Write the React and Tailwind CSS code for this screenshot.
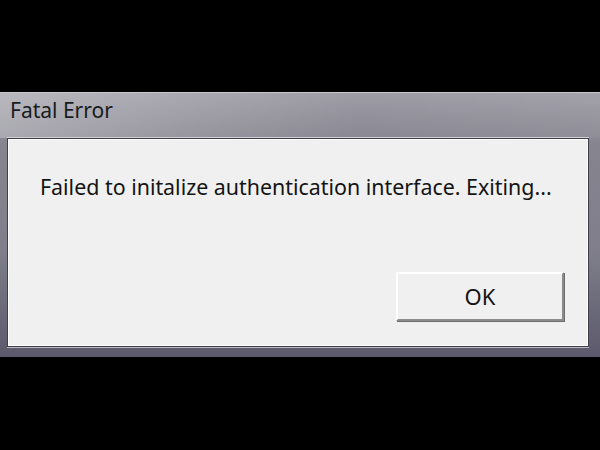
import React from "react";

const App = () => {
  return (
    <div className="w-[600px] h-[450px] bg-black flex flex-col overflow-hidden font-['Noto_Sans',sans-serif]">
      <div className="h-[92px] shrink-0" />

      {/* Window frame */}
      <div className="h-[265px] shrink-0 flex flex-col border-t border-t-[#c9c8ce] bg-[linear-gradient(180deg,#9e9da6_0%,#85848f_20%,#7f7e8a_60%,#5b596b_100%)]">
        {/* Title bar */}
        <div className="h-[45px] shrink-0 pl-[10px] pt-[3px] bg-[linear-gradient(90deg,rgba(255,255,255,0.28)_0%,rgba(255,255,255,0.12)_30%,rgba(255,255,255,0)_60%,rgba(255,255,255,0.05)_100%)]">
          <span className="text-[21px] leading-[28px] text-[#161c20]">Fatal Error</span>
        </div>

        {/* Panel */}
        <div className="ml-[7px] mr-[11px] h-[209px] border border-[#3f3e4a] shadow-[0_-1px_0_#d2d1d6,0_1px_0_#b9b8c2]">
          <div className="h-full border border-white bg-[#f0f0f0] flex flex-col pl-[31px] pr-[23px] pt-[32px] pb-[24px]">
            <p className="text-[21.4px] leading-[29px] text-[#141414] whitespace-nowrap">
              Failed to initalize authentication interface. Exiting...
            </p>
            <div className="flex-1" />
            <div className="flex justify-end">
              <button className="w-[168px] h-[49px] bg-[#f0f0f0] border-t-2 border-l-2 border-t-white border-l-white border-r-2 border-b-2 border-r-[#8c8c8c] border-b-[#8c8c8c] shadow-[1px_1px_0_#6d6d6d] text-[22px] text-[#141414] flex items-center justify-center">
                OK
              </button>
            </div>
          </div>
        </div>
      </div>

      <div className="flex-1" />
    </div>
  );
};

export default App;
